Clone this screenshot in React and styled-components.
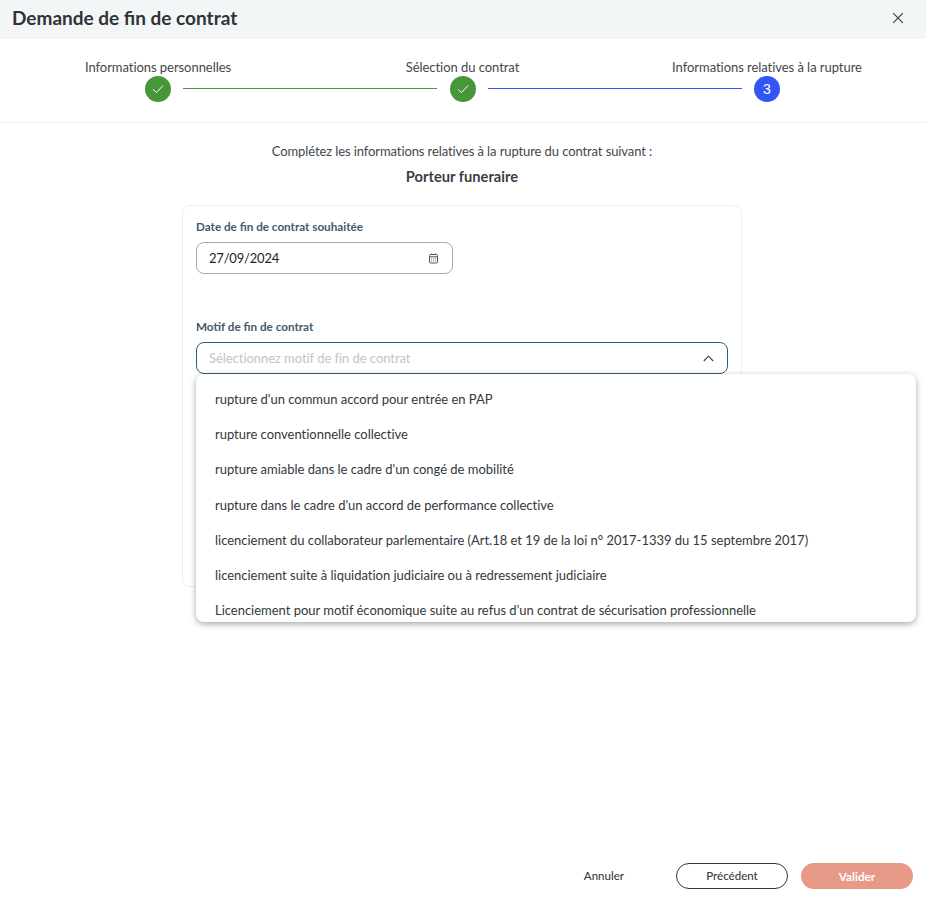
import React from "react";
import styled, { createGlobalStyle } from "styled-components";

const Global = createGlobalStyle`
  html, body { margin: 0; padding: 0; background: #fff; }
  body { font-family: Lato, "Noto Sans", sans-serif; color: #2b2f33; overflow: hidden; }
  * { box-sizing: border-box; }
`;
const Page = styled.div`
  height: 898px;
  display: flex;
  flex-direction: column;
`;
const Header = styled.header`
  height: 39px;
  flex: none;
  background: #f3f6f7;
  display: flex;
  align-items: center;
  justify-content: space-between;
  padding: 0 22px 4px 12px;
`;
const Title = styled.h1`
  margin: 0;
  font-size: 19px;
  font-weight: 700;
  color: #2e3338;
`;
const CloseButton = styled.button`
  border: 0;
  background: none;
  padding: 0;
  width: 12px;
  height: 12px;
  display: flex;
  color: #33373b;
`;
const Stepper = styled.nav`
  height: 84px;
  flex: none;
  border-bottom: 1px solid #eceeef;
  padding: 20px 146px 0 145px;
  display: flex;
  align-items: flex-start;
`;
const Step = styled.div`
  flex: none;
  width: 26px;
  display: flex;
  flex-direction: column;
  align-items: center;
`;
const StepLabel = styled.span`
  white-space: nowrap;
  font-size: 13px;
  letter-spacing: -0.05px;
  line-height: 17px;
  color: #43474b;
`;
const StepCircle = styled.span`
  width: 26px;
  height: 26px;
  border-radius: 50%;
  background: ${(p) => (p.$active ? "#3355f5" : "#47963a")};
  color: #fff;
  display: flex;
  align-items: center;
  justify-content: center;
  font-family: "Liberation Sans", sans-serif;
  font-size: 14px;
`;
const Connector = styled.span`
  flex: 1;
  height: 1px;
  margin: 29px 12.5px 0 12px;
  background: ${(p) => (p.$active ? "#3355f5" : "#47963a")};
`;
const Main = styled.main`
  flex: 1;
  padding-right: 2px;
  display: flex;
  flex-direction: column;
  align-items: center;
`;
const Intro = styled.p`
  margin: 20px 0 0;
  font-size: 13px;
  letter-spacing: -0.1px;
  line-height: 17px;
  color: #43474b;
`;
const ContractName = styled.p`
  margin: 8px 0 0;
  font-size: 14.7px;
  line-height: 17px;
  font-weight: 700;
  color: #3a3f43;
`;
const Card = styled.section`
  width: 560px;
  height: 382px;
  margin-top: 20px;
  border: 1px solid #eeeff0;
  border-radius: 8px;
  padding: 12px 13px 13px;
  display: flex;
  flex-direction: column;
`;
const Field = styled.div`
  position: relative;
  display: flex;
  flex-direction: column;
  margin-bottom: 44px;
`;
const Label = styled.label`
  font-size: 11.7px;
  line-height: 16px;
  font-weight: 700;
  color: #44586a;
  margin-bottom: 8px;
`;
const DateInput = styled.div`
  width: 257px;
  height: 32px;
  border: 1px solid #a8a8a8;
  border-radius: 8px;
  padding: 0 13px 0 12px;
  display: flex;
  align-items: center;
  justify-content: space-between;
  font-size: 13px;
  letter-spacing: -0.2px;
  color: #1f2326;
`;
const Select = styled.div`
  width: 532px;
  height: 32px;
  border: 1px solid #2e5f78;
  border-radius: 8px;
  padding: 0 13px 0 12px;
  display: flex;
  align-items: center;
  justify-content: space-between;
`;
const Placeholder = styled.span`
  font-size: 13px;
  letter-spacing: -0.05px;
  color: #c2c4c6;
`;
const Dropdown = styled.ul`
  position: absolute;
  top: 56px;
  left: 0;
  width: 720px;
  height: 248px;
  margin: 0;
  padding: 7.4px 0 0;
  list-style: none;
  overflow: hidden;
  background: #fff;
  border-radius: 8px;
  box-shadow: 0 2px 6px rgba(0, 0, 0, 0.35);
`;
const Option = styled.li`
  height: 35.2px;
  padding: 0 19px;
  display: flex;
  align-items: center;
  white-space: nowrap;
  font-size: 13px;
  letter-spacing: -0.02px;
  color: #33383c;
`;
const Footer = styled.footer`
  flex: none;
  height: 35px;
  margin-bottom: 5px;
  padding-right: 13px;
  display: flex;
  align-items: center;
  justify-content: flex-end;
`;
const TextButton = styled.button`
  border: 0;
  background: none;
  font: 500 11.5px Lato, sans-serif;
  color: #3a3e42;
  padding: 0;
  margin-right: 52px;
`;
const OutlineButton = styled.button`
  width: 112px;
  height: 26px;
  border: 1px solid #33373b;
  border-radius: 13px;
  background: #fff;
  font: 500 11.5px Lato, sans-serif;
  color: #3a3e42;
  margin-right: 13px;
`;
const PrimaryButton = styled.button`
  width: 112px;
  height: 26px;
  border: 0;
  border-radius: 13px;
  background: #e89a88;
  color: #fff;
  font: 700 11.7px Lato, sans-serif;
`;

const Check = () => (
  <svg width="12" height="12" viewBox="0 0 12 12" fill="none" stroke="#fff" strokeWidth="1" aria-hidden="true">
    <path d="M1 6.2 4.4 9.6 11 2.6" />
  </svg>
);
const CloseIcon = () => (
  <svg width="12" height="12" viewBox="0 0 12 12" fill="none" stroke="currentColor" strokeWidth="1.1" aria-hidden="true">
    <path d="M1.2 1.2 10.8 10.8M10.8 1.2 1.2 10.8" />
  </svg>
);
const CalendarIcon = () => (
  <svg width="11" height="11" viewBox="0 0 11 11" fill="none" stroke="#55595d" strokeWidth="1" aria-hidden="true">
    <rect x="1.5" y="1.5" width="8" height="8.5" rx="1" />
    <path d="M1.5 3.8h8M3.5 0.5v1.5M7.5 0.5v1.5" />
    <path d="M3 5.8h1M5 5.8h1M7 5.8h1M3 7.8h1M5 7.8h1M7 7.8h1" strokeWidth="0.8" />
  </svg>
);
const ChevronUp = () => (
  <svg width="11" height="7" viewBox="0 0 11 7" fill="none" stroke="#3a3e42" strokeWidth="1.1" aria-hidden="true">
    <path d="M0.8 6 5.5 1.2 10.2 6" />
  </svg>
);

const options = [
  "rupture d'un commun accord pour entrée en PAP",
  "rupture conventionnelle collective",
  "rupture amiable dans le cadre d'un congé de mobilité",
  "rupture dans le cadre d'un accord de performance collective",
  "licenciement du collaborateur parlementaire (Art.18 et 19 de la loi n° 2017-1339 du 15 septembre 2017)",
  "licenciement suite à liquidation judiciaire ou à redressement judiciaire",
  "Licenciement pour motif économique suite au refus d’un contrat de sécurisation professionnelle",
];

export default function App() {
  return (
    <Page>
      <Global />
      <Header>
        <Title>Demande de fin de contrat</Title>
        <CloseButton aria-label="Fermer"><CloseIcon /></CloseButton>
      </Header>
      <Stepper>
        <Step>
          <StepLabel>Informations personnelles</StepLabel>
          <StepCircle><Check /></StepCircle>
        </Step>
        <Connector />
        <Step>
          <StepLabel>Sélection du contrat</StepLabel>
          <StepCircle><Check /></StepCircle>
        </Step>
        <Connector $active />
        <Step>
          <StepLabel>Informations relatives à la rupture</StepLabel>
          <StepCircle $active>3</StepCircle>
        </Step>
      </Stepper>
      <Main>
        <Intro>Complétez les informations relatives à la rupture du contrat suivant :</Intro>
        <ContractName>Porteur funeraire</ContractName>
        <Card>
          <Field>
            <Label>Date de fin de contrat souhaitée</Label>
            <DateInput>27/09/2024<CalendarIcon /></DateInput>
          </Field>
          <Field>
            <Label>Motif de fin de contrat</Label>
            <Select>
              <Placeholder>Sélectionnez motif de fin de contrat</Placeholder>
              <ChevronUp />
            </Select>
            <Dropdown>
              {options.map((o) => <Option key={o}>{o}</Option>)}
            </Dropdown>
          </Field>
        </Card>
      </Main>
      <Footer>
        <TextButton>Annuler</TextButton>
        <OutlineButton>Précédent</OutlineButton>
        <PrimaryButton>Valider</PrimaryButton>
      </Footer>
    </Page>
  );
}
